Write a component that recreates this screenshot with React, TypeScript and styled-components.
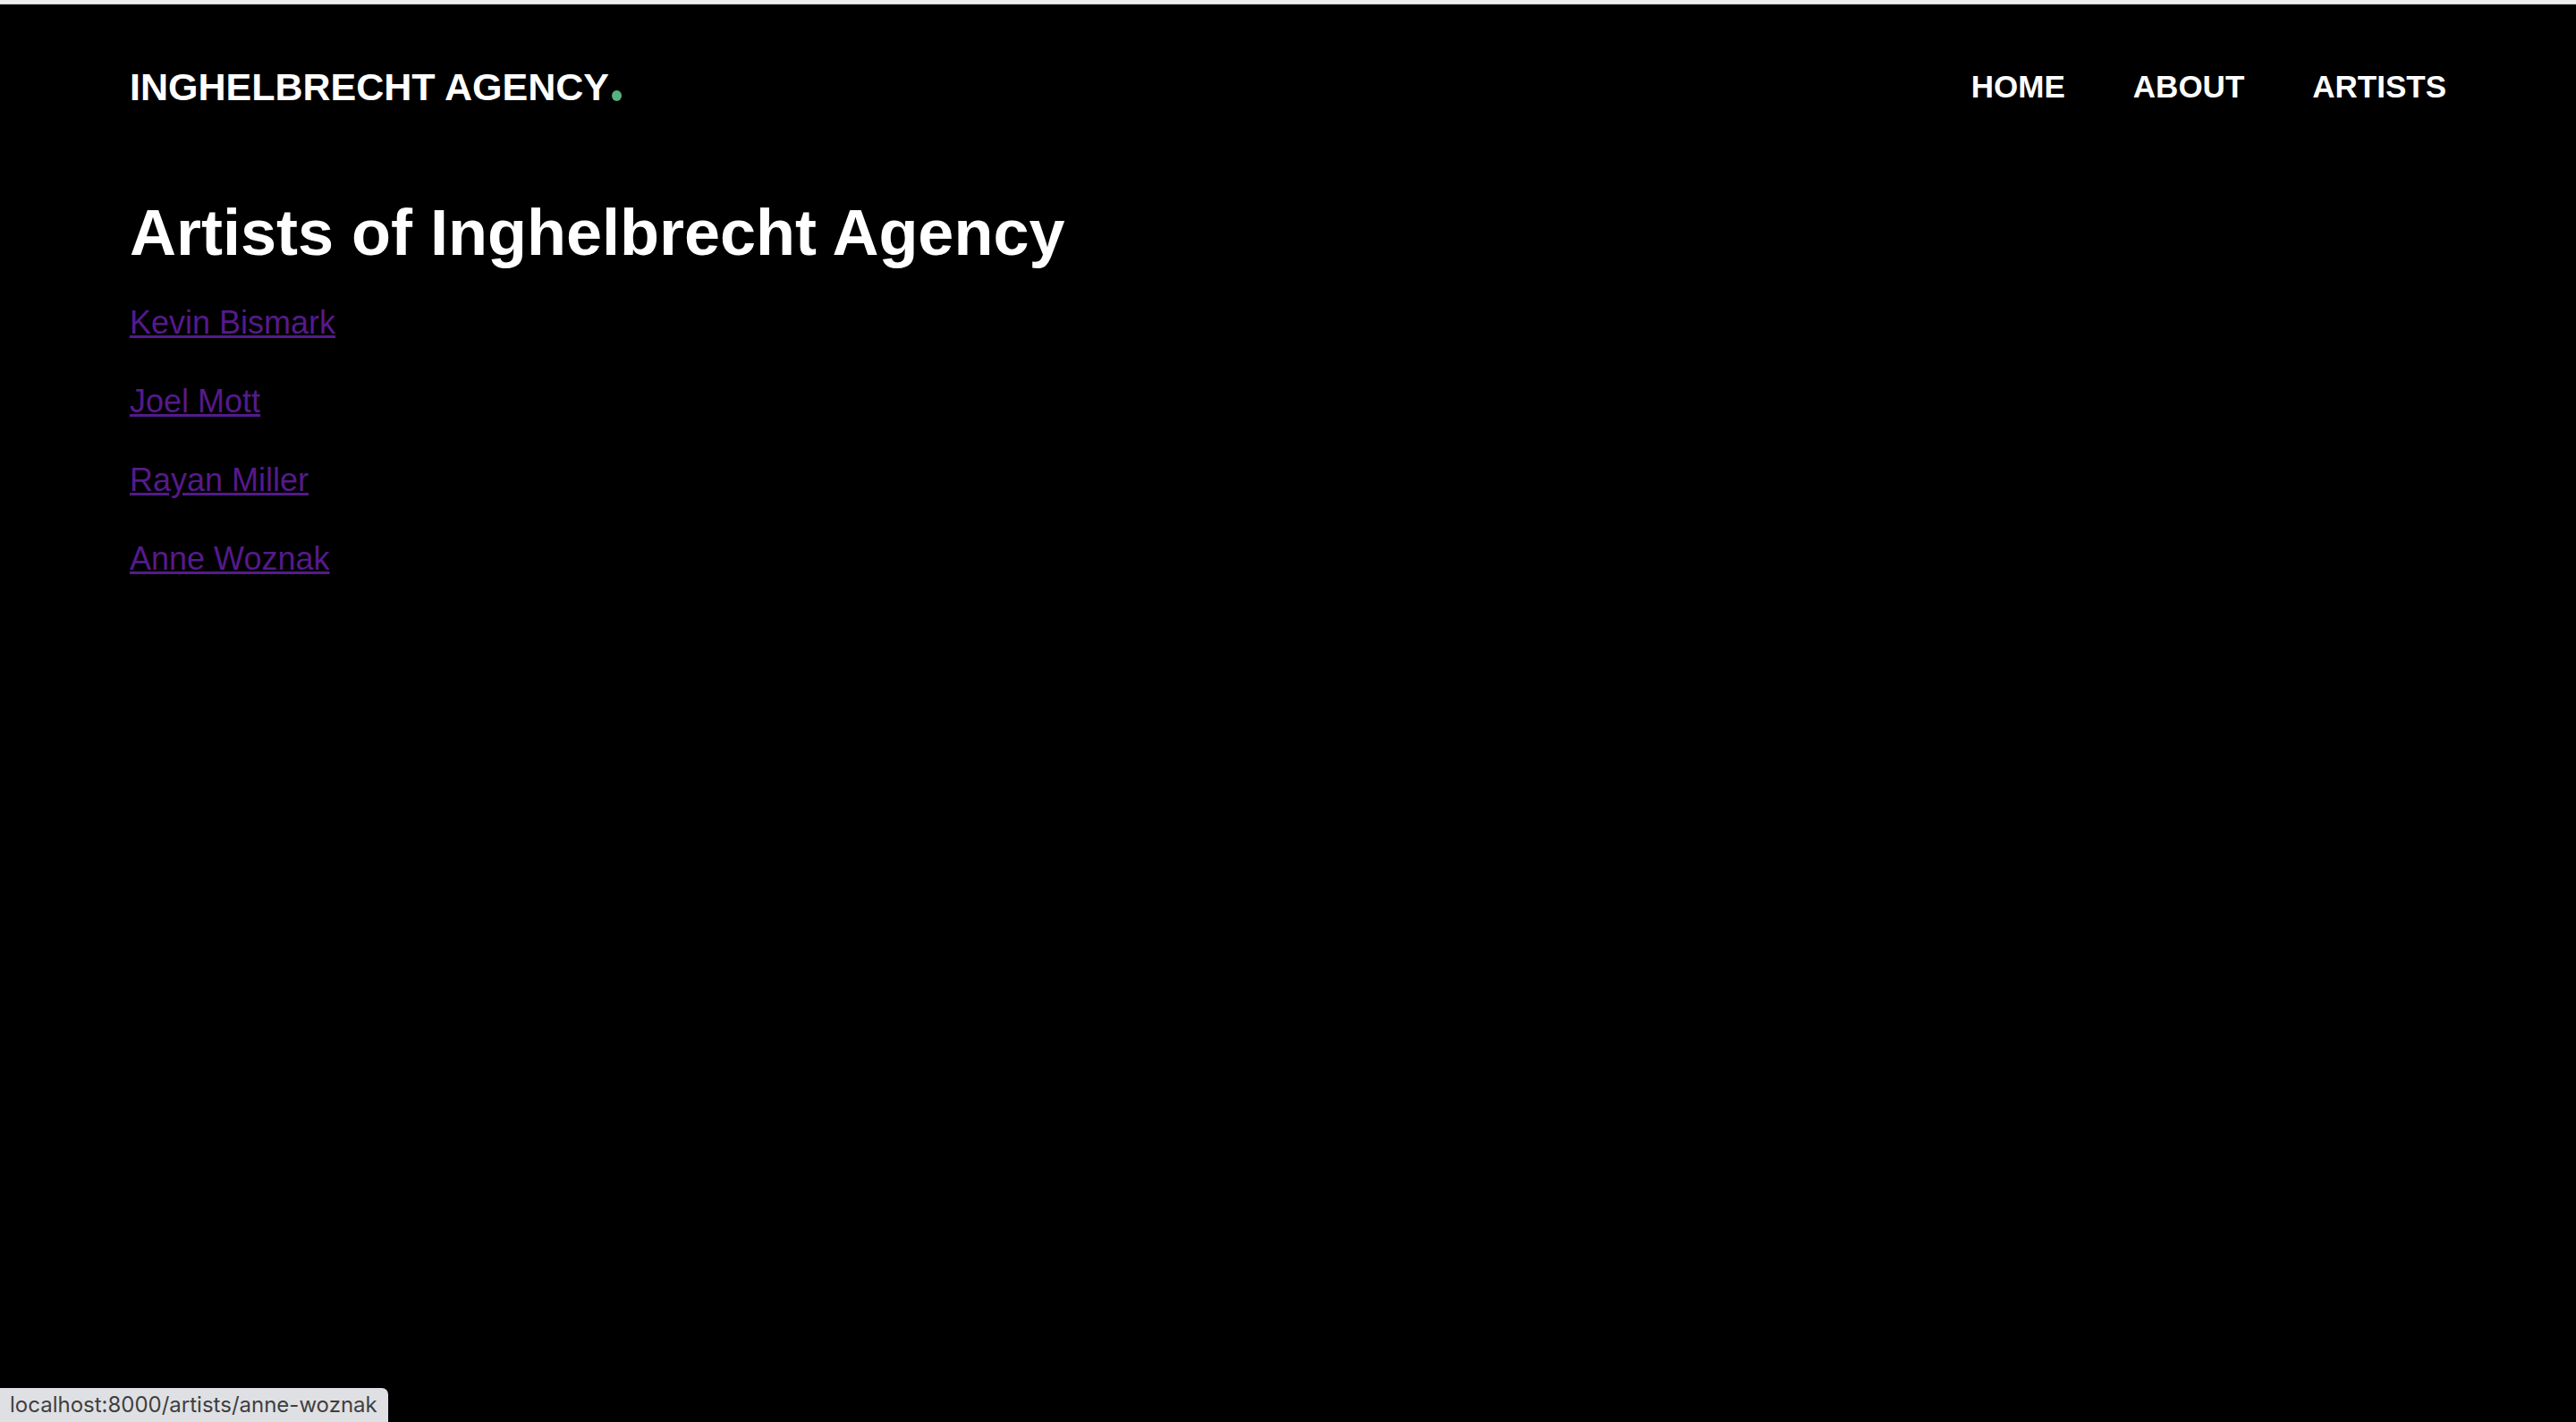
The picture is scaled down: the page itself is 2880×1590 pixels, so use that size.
import React from "react";
import styled, { createGlobalStyle } from "styled-components";

const GlobalStyle = createGlobalStyle`
  html, body {
    margin: 0;
    padding: 0;
    background: #000000;
  }
  body {
    font-family: "Liberation Sans", Arial, Helvetica, sans-serif;
    color: #ffffff;
  }
  * { box-sizing: border-box; }
`;

const Page = styled.div`
  min-height: 1590px;
  background: #000000;
  display: flex;
  flex-direction: column;
`;

const ChromeEdge = styled.div`
  height: 5px;
  background: #eeeeee;
  border-bottom: 1px solid #cfcfcf;
`;

const Header = styled.header`
  display: flex;
  justify-content: space-between;
  align-items: flex-start;
  padding: 67px 145px 0 145px;
`;

const Logo = styled.a`
  font-size: 43px;
  line-height: 50px;
  font-weight: 700;
  color: #ffffff;
  text-decoration: none;
  display: inline-flex;
  align-items: baseline;
`;

const LogoDot = styled.span`
  display: inline-block;
  width: 11px;
  height: 12px;
  border-radius: 50%;
  background: #56b37f;
  margin-left: 3px;
  transform: translateY(1px);
`;

const Nav = styled.nav`
  display: flex;
  gap: 76px;
`;

const NavLink = styled.a`
  font-size: 35px;
  line-height: 50px;
  font-weight: 700;
  color: #ffffff;
  text-decoration: none;
  text-transform: uppercase;
`;

const Main = styled.main`
  padding: 98px 145px 0 145px;
  display: flex;
  flex-direction: column;
`;

const Title = styled.h1`
  margin: 0;
  font-size: 72px;
  line-height: 80px;
  font-weight: 700;
  color: #ffffff;
`;

const ArtistList = styled.ul`
  list-style: none;
  margin: 35px 0 0 0;
  padding: 0;
  display: flex;
  flex-direction: column;
  gap: 36px;
`;

const ArtistItem = styled.li`
  font-size: 36px;
  line-height: 52px;
`;

const ArtistLink = styled.a`
  color: #551a8b;
  text-decoration: underline;
`;

const StatusBubble = styled.div`
  position: fixed;
  left: 0;
  bottom: 0;
  height: 38px;
  padding: 0 12px 0 11px;
  background: #dfe0e4;
  border-top-right-radius: 7px;
  color: #3f3f3f;
  font-family: Inter, "Noto Sans", sans-serif;
  font-size: 24px;
  line-height: 38px;
  white-space: nowrap;
`;

const artists = [
  { name: "Kevin Bismark", slug: "kevin-bismark" },
  { name: "Joel Mott", slug: "joel-mott" },
  { name: "Rayan Miller", slug: "rayan-miller" },
  { name: "Anne Woznak", slug: "anne-woznak" },
];

export default function App() {
  return (
    <>
      <GlobalStyle />
      <Page>
        <ChromeEdge />
        <Header>
          <Logo href="#">
            INGHELBRECHT AGENCY
            <LogoDot aria-hidden="true" />
          </Logo>
          <Nav>
            <NavLink href="#">Home</NavLink>
            <NavLink href="#">About</NavLink>
            <NavLink href="#">Artists</NavLink>
          </Nav>
        </Header>
        <Main>
          <Title>Artists of Inghelbrecht Agency</Title>
          <ArtistList>
            {artists.map((a) => (
              <ArtistItem key={a.slug}>
                <ArtistLink href={`#/artists/${a.slug}`}>{a.name}</ArtistLink>
              </ArtistItem>
            ))}
          </ArtistList>
        </Main>
      </Page>
      <StatusBubble>localhost:8000/artists/anne-woznak</StatusBubble>
    </>
  );
}
